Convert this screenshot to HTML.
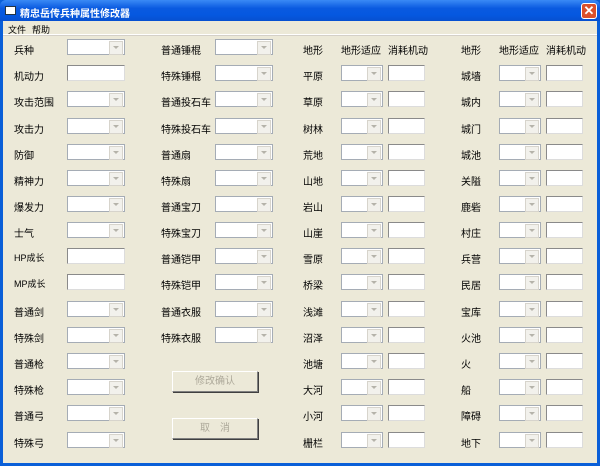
<!DOCTYPE html>
<html><head><meta charset="utf-8"><style>
*{margin:0;padding:0;box-sizing:border-box}
body{width:600px;height:466px;overflow:hidden;background:#0a5fd8;font-family:"Liberation Sans","Noto Sans CJK SC","WenQuanYi Zen Hei",sans-serif;font-size:10px;color:#000;position:relative}
#tb{position:absolute;left:0;top:0;width:600px;height:21px;background:linear-gradient(#3a8af5,#0a5ae0 40%,#0558e0 70%,#0650d0);border-radius:6px 6px 0 0}
#tt{position:absolute;left:20px;top:5px;color:#fff;font-weight:bold;font-size:10px}
#ic{position:absolute;left:5px;top:6px;width:11px;height:9px;background:#fff;border:1px solid #234}
#cl{position:absolute;left:581px;top:3px;width:16px;height:16px;background:#d9502c;border:1px solid #fff;border-radius:3px;color:#fff;font-size:13px;line-height:13px;text-align:center;font-weight:bold}
#cl:before{content:"✕"}
#body{position:absolute;left:3px;top:21px;width:594px;height:442px;background:#ece9d8}
#menu{position:absolute;left:0;top:0;width:594px;height:14px;border-bottom:1px solid #fff;box-shadow:0 1px 0 #d4d0c8}
#menu span{position:absolute;top:2px;font-size:9px}
.l{position:absolute;font-size:10px;white-space:nowrap;margin-top:1px}
.c,.t{position:absolute;height:16px;background:#fff;border:1px solid #a5acb5}
.c{width:58px}
.c:after{content:"";position:absolute;right:1px;top:1px;width:12px;height:12px;background:#f2f1ec;border:1px solid #d7d4cc}
.c:before{content:"";position:absolute;right:5px;top:6px;border:3px solid transparent;border-top:3px solid #b5b3aa;z-index:2}
.c.s{width:42px}
.t{width:58px;border-color:#8a8a8a #dcdcdc #dcdcdc #8a8a8a}
.t.s{width:37px}
.b{position:absolute;left:169px;width:86px;height:21px;border:1px solid;border-color:#fff #808080 #808080 #fff;box-shadow:1px 1px 0 #404040;color:#aca899;text-align:center;line-height:19px;font-size:10px}
</style></head><body>
<div id="tb"><div id="ic"></div><div id="tt">精忠岳传兵种属性修改器</div><div id="cl"></div></div>
<div id="body">
<div id="menu"><span style="left:5px">文件</span><span style="left:29px">帮助</span></div>

<div class="l" style="left:11px;top:20px">兵种</div><div class="c" style="left:64px;top:18px"></div>
<div class="l" style="left:11px;top:46px">机动力</div><div class="t" style="left:64px;top:44px"></div>
<div class="l" style="left:11px;top:72px">攻击范围</div><div class="c" style="left:64px;top:70px"></div>
<div class="l" style="left:11px;top:99px">攻击力</div><div class="c" style="left:64px;top:97px"></div>
<div class="l" style="left:11px;top:125px">防御</div><div class="c" style="left:64px;top:123px"></div>
<div class="l" style="left:11px;top:151px">精神力</div><div class="c" style="left:64px;top:149px"></div>
<div class="l" style="left:11px;top:177px">爆发力</div><div class="c" style="left:64px;top:175px"></div>
<div class="l" style="left:11px;top:203px">士气</div><div class="c" style="left:64px;top:201px"></div>
<div class="l" style="left:11px;top:229px;font-size:9px">HP成长</div><div class="t" style="left:64px;top:227px"></div>
<div class="l" style="left:11px;top:255px;font-size:9px">MP成长</div><div class="t" style="left:64px;top:253px"></div>
<div class="l" style="left:11px;top:282px">普通剑</div><div class="c" style="left:64px;top:280px"></div>
<div class="l" style="left:11px;top:308px">特殊剑</div><div class="c" style="left:64px;top:306px"></div>
<div class="l" style="left:11px;top:334px">普通枪</div><div class="c" style="left:64px;top:332px"></div>
<div class="l" style="left:11px;top:360px">特殊枪</div><div class="c" style="left:64px;top:358px"></div>
<div class="l" style="left:11px;top:386px">普通弓</div><div class="c" style="left:64px;top:384px"></div>
<div class="l" style="left:11px;top:413px">特殊弓</div><div class="c" style="left:64px;top:411px"></div>

<div class="l" style="left:158px;top:20px">普通锤棍</div><div class="c" style="left:212px;top:18px"></div>
<div class="l" style="left:158px;top:46px">特殊锤棍</div><div class="c" style="left:212px;top:44px"></div>
<div class="l" style="left:158px;top:72px">普通投石车</div><div class="c" style="left:212px;top:70px"></div>
<div class="l" style="left:158px;top:99px">特殊投石车</div><div class="c" style="left:212px;top:97px"></div>
<div class="l" style="left:158px;top:125px">普通扇</div><div class="c" style="left:212px;top:123px"></div>
<div class="l" style="left:158px;top:151px">特殊扇</div><div class="c" style="left:212px;top:149px"></div>
<div class="l" style="left:158px;top:177px">普通宝刀</div><div class="c" style="left:212px;top:175px"></div>
<div class="l" style="left:158px;top:203px">特殊宝刀</div><div class="c" style="left:212px;top:201px"></div>
<div class="l" style="left:158px;top:229px">普通铠甲</div><div class="c" style="left:212px;top:227px"></div>
<div class="l" style="left:158px;top:255px">特殊铠甲</div><div class="c" style="left:212px;top:253px"></div>
<div class="l" style="left:158px;top:282px">普通衣服</div><div class="c" style="left:212px;top:280px"></div>
<div class="l" style="left:158px;top:308px">特殊衣服</div><div class="c" style="left:212px;top:306px"></div>

<div class="b" style="top:350px">修改确认</div>
<div class="b" style="top:397px">取　消</div>

<div class="l" style="left:300px;top:20px">地形</div><div class="l" style="left:338px;top:20px">地形适应</div><div class="l" style="left:385px;top:20px">消耗机动</div>
<div class="l" style="left:458px;top:20px">地形</div><div class="l" style="left:496px;top:20px">地形适应</div><div class="l" style="left:543px;top:20px">消耗机动</div>

<div class="l" style="left:300px;top:46px">平原</div><div class="c s" style="left:338px;top:44px"></div><div class="t s" style="left:385px;top:44px"></div>
<div class="l" style="left:300px;top:72px">草原</div><div class="c s" style="left:338px;top:70px"></div><div class="t s" style="left:385px;top:70px"></div>
<div class="l" style="left:300px;top:99px">树林</div><div class="c s" style="left:338px;top:97px"></div><div class="t s" style="left:385px;top:97px"></div>
<div class="l" style="left:300px;top:125px">荒地</div><div class="c s" style="left:338px;top:123px"></div><div class="t s" style="left:385px;top:123px"></div>
<div class="l" style="left:300px;top:151px">山地</div><div class="c s" style="left:338px;top:149px"></div><div class="t s" style="left:385px;top:149px"></div>
<div class="l" style="left:300px;top:177px">岩山</div><div class="c s" style="left:338px;top:175px"></div><div class="t s" style="left:385px;top:175px"></div>
<div class="l" style="left:300px;top:203px">山崖</div><div class="c s" style="left:338px;top:201px"></div><div class="t s" style="left:385px;top:201px"></div>
<div class="l" style="left:300px;top:229px">雪原</div><div class="c s" style="left:338px;top:227px"></div><div class="t s" style="left:385px;top:227px"></div>
<div class="l" style="left:300px;top:255px">桥梁</div><div class="c s" style="left:338px;top:253px"></div><div class="t s" style="left:385px;top:253px"></div>
<div class="l" style="left:300px;top:282px">浅滩</div><div class="c s" style="left:338px;top:280px"></div><div class="t s" style="left:385px;top:280px"></div>
<div class="l" style="left:300px;top:308px">沼泽</div><div class="c s" style="left:338px;top:306px"></div><div class="t s" style="left:385px;top:306px"></div>
<div class="l" style="left:300px;top:334px">池塘</div><div class="c s" style="left:338px;top:332px"></div><div class="t s" style="left:385px;top:332px"></div>
<div class="l" style="left:300px;top:360px">大河</div><div class="c s" style="left:338px;top:358px"></div><div class="t s" style="left:385px;top:358px"></div>
<div class="l" style="left:300px;top:386px">小河</div><div class="c s" style="left:338px;top:384px"></div><div class="t s" style="left:385px;top:384px"></div>
<div class="l" style="left:300px;top:413px">栅栏</div><div class="c s" style="left:338px;top:411px"></div><div class="t s" style="left:385px;top:411px"></div>

<div class="l" style="left:458px;top:46px">城墙</div><div class="c s" style="left:496px;top:44px"></div><div class="t s" style="left:543px;top:44px"></div>
<div class="l" style="left:458px;top:72px">城内</div><div class="c s" style="left:496px;top:70px"></div><div class="t s" style="left:543px;top:70px"></div>
<div class="l" style="left:458px;top:99px">城门</div><div class="c s" style="left:496px;top:97px"></div><div class="t s" style="left:543px;top:97px"></div>
<div class="l" style="left:458px;top:125px">城池</div><div class="c s" style="left:496px;top:123px"></div><div class="t s" style="left:543px;top:123px"></div>
<div class="l" style="left:458px;top:151px">关隘</div><div class="c s" style="left:496px;top:149px"></div><div class="t s" style="left:543px;top:149px"></div>
<div class="l" style="left:458px;top:177px">鹿砦</div><div class="c s" style="left:496px;top:175px"></div><div class="t s" style="left:543px;top:175px"></div>
<div class="l" style="left:458px;top:203px">村庄</div><div class="c s" style="left:496px;top:201px"></div><div class="t s" style="left:543px;top:201px"></div>
<div class="l" style="left:458px;top:229px">兵营</div><div class="c s" style="left:496px;top:227px"></div><div class="t s" style="left:543px;top:227px"></div>
<div class="l" style="left:458px;top:255px">民居</div><div class="c s" style="left:496px;top:253px"></div><div class="t s" style="left:543px;top:253px"></div>
<div class="l" style="left:458px;top:282px">宝库</div><div class="c s" style="left:496px;top:280px"></div><div class="t s" style="left:543px;top:280px"></div>
<div class="l" style="left:458px;top:308px">火池</div><div class="c s" style="left:496px;top:306px"></div><div class="t s" style="left:543px;top:306px"></div>
<div class="l" style="left:458px;top:334px">火</div><div class="c s" style="left:496px;top:332px"></div><div class="t s" style="left:543px;top:332px"></div>
<div class="l" style="left:458px;top:360px">船</div><div class="c s" style="left:496px;top:358px"></div><div class="t s" style="left:543px;top:358px"></div>
<div class="l" style="left:458px;top:386px">障碍</div><div class="c s" style="left:496px;top:384px"></div><div class="t s" style="left:543px;top:384px"></div>
<div class="l" style="left:458px;top:413px">地下</div><div class="c s" style="left:496px;top:411px"></div><div class="t s" style="left:543px;top:411px"></div>
</div>
</body></html>
